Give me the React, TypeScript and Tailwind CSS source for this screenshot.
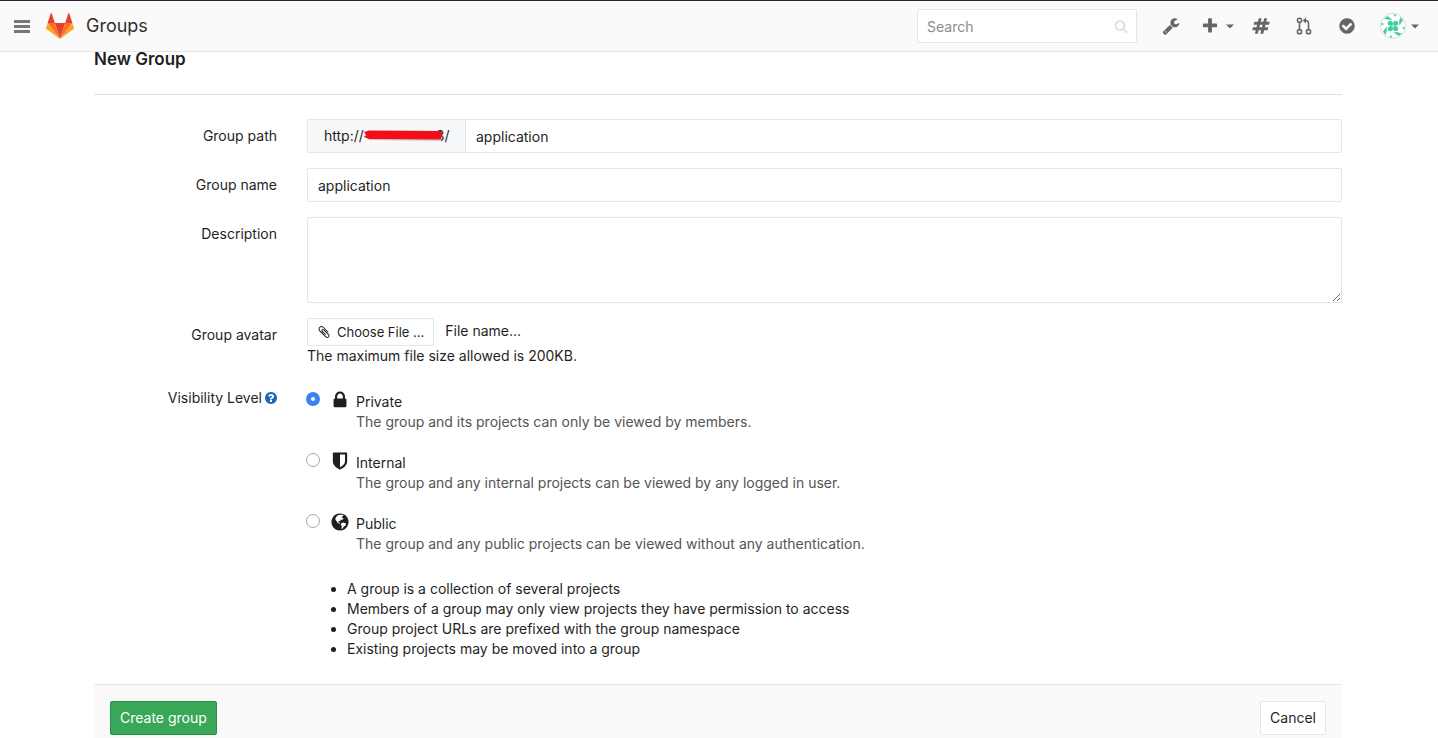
import { useState } from "react";

interface IconProps {
  path: string;
  className?: string;
}

const circle =
  "q0 209-103 385.500t-279.500 279.500-385.500 103-385.500-103-279.500-279.500-103-385.500 103-385.500 279.500-279.500 385.500-103 385.500 103 279.500 279.500 103 385.500z";

const icons = {
  wrench:
    "M448 1472q0-26-19-45t-45-19-45 19-19 45 19 45 45 19 45-19 19-45zm644-420l-682 682q-37 37-90 37-52 0-91-37l-106-108q-38-36-38-90 0-53 38-91l681-681q39 98 114.500 173.500t173.500 114.500zm634-435q0 39-23 106-47 134-164.500 217.500t-258.500 83.500q-185 0-316.500-131.500t-131.500-316.500 131.500-316.500 316.500-131.500q58 0 121.500 16.500t107.500 46.500q16 11 16 28t-16 28l-293 169v224l193 107q5-3 79-48.500t135.500-81 70.500-35.500q15 0 23.500 10t8.500 25z",
  plus: "M1600 736v192q0 40-28 68t-68 28h-416v416q0 40-28 68t-68 28h-192q-40 0-68-28t-28-68v-416h-416q-40 0-68-28t-28-68v-192q0-40 28-68t68-28h416v-416q0-40 28-68t68-28h192q40 0 68 28t28 68v416h416q40 0 68 28t28 68z",
  hashtag:
    "M991 1024l64-256h-254l-64 256h254zm768-504l-56 224q-7 24-31 24h-327l-64 256h311q15 0 25 12 10 14 6 28l-56 224q-5 24-31 24h-327l-81 328q-7 24-31 24h-224q-16 0-26-12-9-12-6-28l78-312h-254l-81 328q-7 24-31 24h-225q-15 0-25-12-9-12-6-28l78-312h-311q-15 0-25-12-9-12-6-28l56-224q7-24 31-24h327l64-256h-311q-15 0-25-12-10-14-6-28l56-224q5-24 31-24h327l81-328q7-24 32-24h224q15 0 25 12 9 12 6 28l-78 312h254l81-328q7-24 32-24h224q15 0 25 12 9 12 6 28l-78 312h311q15 0 25 12 9 12 6 28z",
  check:
    "M1412 734q0-28-18-46l-91-90q-19-19-45-19t-45 19l-408 407-226-226q-19-19-45-19t-45 19l-91 90q-18 18-18 46 0 27 18 45l362 362q19 19 45 19 27 0 46-19l543-543q18-18 18-45zm252 162" +
    circle,
  question:
    "M1024 1376v-192q0-14-9-23t-23-9h-192q-14 0-23 9t-9 23v192q0 14 9 23t23 9h192q14 0 23-9t9-23zm256-672q0-88-55.500-163t-138.500-116-170-41q-243 0-371 213-15 24 8 42l132 100q7 6 19 6 16 0 25-12 53-68 86-92 34-24 86-24 48 0 85.500 26t37.500 59q0 38-20 61t-68 45q-63 28-115.500 86.500t-52.500 125.500v36q0 14 9 23t23 9h192q14 0 23-9t9-23q0-19 21.500-49.500t54.500-49.500q32-18 49-28.500t46-35 44.500-48 28-60.500 12.500-81zm384 192" +
    circle,
  lock: "M640 768h512v-192q0-106-75-181t-181-75-181 75-75 181v192zm832 96v576q0 40-28 68t-68 28h-960q-40 0-68-28t-28-68v-576q0-40 28-68t68-28h32v-192q0-184 132-316t316-132 316 132 132 316v192h32q40 0 68 28t28 68z",
  shield:
    "M1344 960v-640h-448v1137q119-63 213-137 235-184 235-360zm192-768v768q0 86-33.500 170.500t-83 150-118 127.500-126.500 103-121 77.500-89.500 49.500-42.500 20q-12 6-26 6t-26-6q-16-7-42.500-20t-89.500-49.500-121-77.500-126.500-103-118-127.500-83-150-33.500-170.500v-768q0-26 19-45t45-19h1152q26 0 45 19t19 45z",
  globe:
    "M1664 896" +
    circle +
    "M560 420L700 300 880 240 1120 250 1230 330 1100 400 1060 500 1220 560 1130 690 980 700 900 830 790 800 740 900 900 980 880 1050 700 980 570 800 470 640zM1010 1010L1180 930 1440 1030 1400 1200 1240 1290 1110 1500 1020 1490 1060 1270 960 1130z",
  search:
    "M1216 832q0-185-131.500-316.500t-316.500-131.500-316.500 131.500-131.500 316.500 131.500 316.500 316.500 131.500 316.500-131.500 131.500-316.500zm512 832q0 52-38 90t-90 38q-54 0-90-38l-343-342q-179 124-399 124-143 0-273.500-55.500t-225-150-150-225-55.500-273.500 55.500-273.500 150-225 225-150 273.500-55.500 273.500 55.500 225 150 150 225 55.500 273.500q0 220-124 399l343 343q37 37 37 90z",
  paperclip:
    "M1596 1385q0 117-79 196t-196 79q-135 0-235-100l-777-776q-113-115-113-271 0-159 110-270t269-111q158 0 273 113l605 606q10 10 10 22 0 16-30.500 46.500t-46.500 30.500q-13 0-23-10l-606-607q-79-77-181-77-106 0-179 75t-73 181q0 105 76 181l776 777q63 63 145 63 64 0 106-42t42-106q0-82-63-145l-581-581q-26-24-60-24-29 0-48 19t-19 48q0 32 25 59l410 410q10 10 10 22 0 16-31 47t-47 31q-12 0-22-10l-410-410q-63-61-63-149 0-82 57-139t139-57q88 0 149 63l581 581q100 98 100 235z",
};

const Icon = ({ path, className }: IconProps) => (
  <svg viewBox="0 0 1792 1792" className={className} fill="currentColor" fillRule="evenodd" aria-hidden="true">
    <path d={path} />
  </svg>
);

const Caret = () => (
  <svg viewBox="0 0 8 5" className="w-2 h-[5px]" fill="currentColor" aria-hidden="true">
    <path d="M0 .5h8L4 4.500z" />
  </svg>
);

const Logo = () => (
  <svg viewBox="0 0 28 26" className="w-7 h-[26px]" aria-hidden="true">
    <path fill="#e24329" d="M14 26 8.800 10h10.400z" />
    <path fill="#fc6d26" d="M14 26 8.800 10H1.600zM14 26l5.200-16h7.200z" />
    <path fill="#fca326" d="M1.600 10 .1 14.800c-.2.500 0 1 .4 1.300L14 26zM26.400 10l1.500 4.800c.2.500 0 1-.4 1.300L14 26z" />
    <path fill="#e24329" d="M1.600 10h7.200L5.700.4c-.2-.5-.8-.5-1 0zM26.400 10h-7.200L22.300.4c.2-.5.800-.5 1 0z" />
  </svg>
);

const MergeRequest = () => (
  <svg viewBox="0 0 16 18" className="w-4 h-[18px]" fill="none" stroke="currentColor" strokeWidth="1.600" aria-hidden="true">
    <circle cx="3.500" cy="3.300" r="2.100" />
    <circle cx="3.500" cy="14.700" r="2.100" />
    <circle cx="12.500" cy="14.700" r="2.100" />
    <path d="M3.500 5.200v7.600M12.500 12.800V6.200q0-2.700-2.700-2.700H9" />
    <path d="M10 .6v5.800L6.700 3.500z" fill="currentColor" stroke="none" />
  </svg>
);

const Identicon = () => (
  <svg viewBox="0 0 26 26" className="w-[26px] h-[26px]" aria-hidden="true">
    <circle cx="13" cy="13" r="12.500" fill="#fff" stroke="#dcdcdc" />
    <g fill="#3fcf9b">
      <path d="M10 9.500h6v7h-6z" opacity=".5" />
      {[0, 90, 180, 270].map((angle) => (
        <g key={angle} transform={`rotate(${angle} 13 13)`}>
          <circle cx="10.300" cy="10.300" r="2.500" />
          <path d="M4 5.500 7.500 3 12.500 6.800H8zM13.500 1.500h3L15 4z" />
        </g>
      ))}
    </g>
  </svg>
);

const levels = [
  {
    value: "private",
    title: "Private",
    icon: icons.lock,
    text: "The group and its projects can only be viewed by members.",
  },
  {
    value: "internal",
    title: "Internal",
    icon: icons.shield,
    text: "The group and any internal projects can be viewed by any logged in user.",
  },
  {
    value: "public",
    title: "Public",
    icon: icons.globe,
    text: "The group and any public projects can be viewed without any authentication.",
  },
];

const notes = [
  "A group is a collection of several projects",
  "Members of a group may only view projects they have permission to access",
  "Group project URLs are prefixed with the group namespace",
  "Existing projects may be moved into a group",
];

const Header = () => (
  <header className="flex items-center h-[52px] pl-3.5 pr-[19px] bg-[#fafafa] border-t border-t-[#29252b] border-b border-b-[#e5e5e5] text-[#666]">
    <button aria-label="Menu" className="flex flex-col gap-[2px]">
      <span className="w-4 h-[3px] bg-[#777]" />
      <span className="w-4 h-[3px] bg-[#777]" />
      <span className="w-4 h-[3px] bg-[#777]" />
    </button>
    <a href="#home" aria-label="Home" className="ml-4">
      <Logo />
    </a>
    <h1 className="ml-3 text-lg text-[#2e2e2e]">Groups</h1>
    <div className="flex items-center ml-auto w-[220px] h-[34px] pl-[9px] pr-2 bg-white border border-[#e5e5e5] rounded-xs">
      <input
        type="text"
        aria-label="Search"
        placeholder="Search"
        className="flex-1 min-w-0 pt-0.5 outline-none placeholder:text-[#8c8c8c]"
      />
      <Icon path={icons.search} className="w-3.5 h-3.5 text-[#e1e1e3]" />
    </div>
    <nav className="flex items-center ml-[25px]">
      <a href="#admin" aria-label="Admin area">
        <Icon path={icons.wrench} className="w-[18px] h-[18px]" />
      </a>
      <button aria-label="New" className="flex items-center gap-[7px] ml-[21px]">
        <Icon path={icons.plus} className="w-[18px] h-[18px]" />
        <Caret />
      </button>
      <a href="#issues" aria-label="Issues" className="ml-[18px]">
        <Icon path={icons.hashtag} className="w-[18px] h-[18px]" />
      </a>
      <a href="#merge" aria-label="Merge requests" className="ml-[26px]">
        <MergeRequest />
      </a>
      <a href="#todos" aria-label="Todos" className="ml-[26px]">
        <Icon path={icons.check} className="w-[18px] h-[18px]" />
      </a>
      <button aria-label="Account" className="flex items-center gap-[5px] ml-6">
        <Identicon />
        <Caret />
      </button>
    </nav>
  </header>
);

const labelClass = "w-[183px] shrink-0 pt-[7px] text-right";
const inputClass = "h-[34px] px-2.5 bg-white border border-[#e5e5e5] rounded-xs outline-none";

const App = () => {
  const [path, setPath] = useState("application");
  const [name, setName] = useState("application");
  const [level, setLevel] = useState("private");

  return (
    <div className="h-screen overflow-hidden bg-white font-[Inter,sans-serif] text-sm leading-5 text-[#1f1f1f]">
      <Header />
      <main className="pl-[94px] pr-24">
        <h3 className="-mt-1 pb-6 border-b border-[#e1e1e1] text-[17px] leading-[22px] font-semibold">New Group</h3>
        <form className="pt-6" onSubmit={(e) => e.preventDefault()}>
          <div className="flex gap-[30px]">
            <label htmlFor="path" className={labelClass}>
              Group path
            </label>
            <div className="flex flex-1">
              <div className="flex items-center w-[158px] h-[34px] px-4 bg-[#f7f8fa] border border-r-0 border-[#e5e5e5] rounded-l-xs">
                http://
                <svg viewBox="0 0 80 14" className="relative shrink-0 w-20 h-3.5 -mr-2" aria-hidden="true">
                  <path fill="#c9c9cf" d="M2 5h77l-2 7-72-1z" />
                  <path fill="#f20d18" d="M0 3l5-1.500 72 .5 1.500 4-2 4.500-71.500-.5-5-2 2-2z" />
                </svg>
                <span>3/</span>
              </div>
              <input id="path" value={path} onChange={(e) => setPath(e.target.value)} className={`${inputClass} flex-1 rounded-l-none`} />
            </div>
          </div>
          <div className="flex gap-[30px] mt-[15px]">
            <label htmlFor="name" className={labelClass}>
              Group name
            </label>
            <input id="name" value={name} onChange={(e) => setName(e.target.value)} className={`${inputClass} flex-1`} />
          </div>
          <div className="flex gap-[30px] mt-[15px]">
            <label htmlFor="description" className={labelClass}>
              Description
            </label>
            <textarea id="description" className="flex-1 h-[86px] px-2.5 py-1.5 border border-[#e5e5e5] rounded-xs outline-none" />
          </div>
          <div className="flex gap-[30px] mt-[15px]">
            <label htmlFor="avatar" className={labelClass}>
              Group avatar
            </label>
            <div>
              <div className="flex gap-[11px]">
                <button
                  id="avatar"
                  type="button"
                  className="flex items-center gap-1.5 h-7 px-[9px] border border-[#e5e5e5] rounded-xs text-[13px]"
                >
                  <Icon path={icons.paperclip} className="w-3.5 h-3.5" />
                  Choose File ...
                </button>
                <span className="pt-[3px]">File name...</span>
              </div>
              <p>The maximum file size allowed is 200KB.</p>
            </div>
          </div>
          <div className="flex gap-[30px] mt-[15px]">
            <div className="flex justify-end gap-0.5 w-[183px] shrink-0 pt-[7px]">
              <span id="visibility">Visibility Level</span>
              <a href="#help" aria-label="Visibility help" className="-mr-px pt-[3px] text-[#1b69b6]">
                <Icon path={icons.question} className="w-3.5 h-3.5" />
              </a>
            </div>
            <div role="radiogroup" aria-labelledby="visibility" className="pt-[11px]">
              {levels.map((item) => (
                <label key={item.value} className="flex mb-[21px]">
                  <input
                    type="radio"
                    name="level"
                    checked={level === item.value}
                    onChange={() => setLevel(item.value)}
                    className="appearance-none w-3.5 h-3.5 shrink-0 -ml-px bg-white border border-[#a6a6a6] rounded-full checked:border-[5px] checked:border-[#3b82f0]"
                  />
                  <Icon path={item.icon} className="w-5 h-5 ml-2.5 mr-1.5 -mt-0.5 shrink-0" />
                  <span>
                    <span className="block">{item.title}</span>
                    <span className="block text-[#555]">{item.text}</span>
                  </span>
                </label>
              ))}
            </div>
          </div>
          <ul className="ml-[253px] mt-1 list-disc">
            {notes.map((note) => (
              <li key={note}>{note}</li>
            ))}
          </ul>
          <div className="flex justify-between mt-[25px] p-4 bg-[#fafafa] border-t border-[#e5e5e5]">
            <button type="submit" className="h-[34px] px-[9px] bg-[#38a757] border border-[#24904a] rounded-xs text-white">
              Create group
            </button>
            <button type="button" className="h-[34px] px-[9px] bg-white border border-[#e5e5e5] rounded-xs">
              Cancel
            </button>
          </div>
        </form>
      </main>
    </div>
  );
};

export default App;
